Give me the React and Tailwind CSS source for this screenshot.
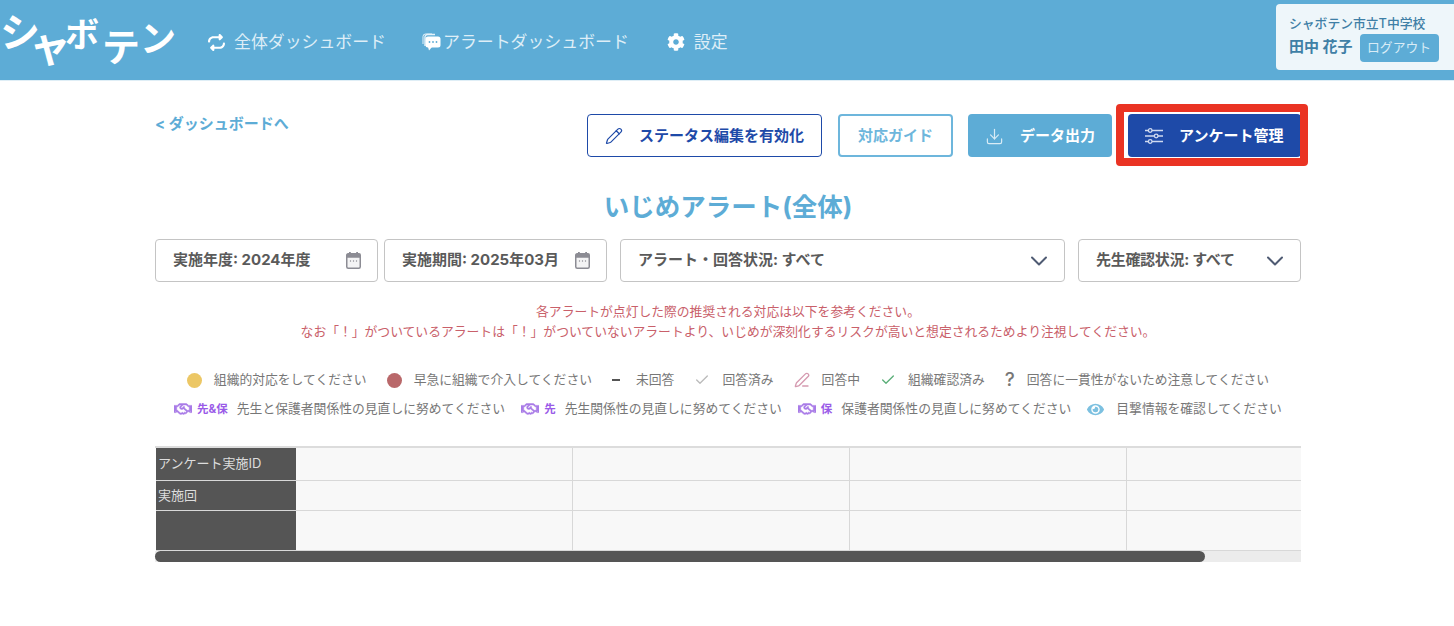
import React from 'react';
import { Pencil, Download, Check, PenLine } from 'lucide-react';
import { FaCog, FaRegHandshake, FaEye } from 'react-icons/fa';
import { FaRepeat } from 'react-icons/fa6';

const NavItem = ({ icon, label, className }) => (
  <div className={`flex items-center text-[16.9px] text-[#deeef7] ${className}`}>
    {icon}
    <span>{label}</span>
  </div>
);

const ChatIcon = () => (
  <svg width="19" height="18" viewBox="0 0 19 18" className="mr-[2px]">
    <path d="M3 13V4a2.5 2.5 0 0 1 2.5-2.5H13" fill="none" stroke="#e6f2f9" strokeWidth="1.4" />
    <path d="M1 11V3.5A2.5 2.5 0 0 1 3.5 1H10" fill="none" stroke="#e6f2f9" strokeWidth="1" />
    <rect x="3.5" y="3.5" width="15" height="11" rx="2.5" fill="#fff" />
    <path d="M6 14h4l-3 3.5z" fill="#fff" />
    <circle cx="7.5" cy="9" r="0.9" fill="#5dacd6" />
    <circle cx="11" cy="9" r="0.9" fill="#5dacd6" />
    <circle cx="14.5" cy="9" r="0.9" fill="#5dacd6" />
  </svg>
);

const CalendarIcon = () => (
  <svg width="15" height="17" viewBox="0 0 15 17">
    <rect x="3" y="0" width="1.8" height="3" fill="#8c8c94" />
    <rect x="10.2" y="0" width="1.8" height="3" fill="#8c8c94" />
    <rect x="0.75" y="1.75" width="13.5" height="14.5" rx="1.5" fill="#f4f4f5" stroke="#8c8c94" strokeWidth="1.5" />
    <rect x="0.75" y="1.75" width="13.5" height="4" fill="#8c8c94" />
    <circle cx="4.5" cy="9" r="0.7" fill="#8c8c94" />
    <circle cx="7.5" cy="9" r="0.7" fill="#8c8c94" />
    <circle cx="10.5" cy="9" r="0.7" fill="#8c8c94" />
  </svg>
);

const Chevron = () => (
  <svg width="18" height="10" viewBox="0 0 18 10" fill="none" stroke="#4f5b73" strokeWidth="2" strokeLinecap="round" strokeLinejoin="round">
    <polyline points="2,1.5 9,8.5 16,1.5" />
  </svg>
);

const SlidersIcon = () => (
  <svg width="18" height="18" viewBox="0 0 18 18" fill="none" stroke="#d0daf0" strokeWidth="1.3" className="mr-[16px]">
    <path d="M0 3.5h3.5M7 3.5h11M0 9h9.5M13 9h5M0 14.5h3.5M7 14.5h11" />
    <circle cx="5.2" cy="3.5" r="1.8" />
    <circle cx="11.2" cy="9" r="1.8" />
    <circle cx="5.2" cy="14.5" r="1.8" />
  </svg>
);

const Filter = ({ label, width, calendar, labelClass = '' }) => (
  <div className={`flex h-[43px] items-center justify-between rounded border border-[#c4c4c4] bg-white pl-[17px] pr-[16px] text-[15px] font-bold text-[#5a5a5a] ${width}`}>
    <span className={labelClass}>{label}</span>
    {calendar ? <CalendarIcon /> : <Chevron />}
  </div>
);

const Legend = ({ icon, label, badge, labelClass }) => (
  <div className="flex items-center whitespace-nowrap text-[12.8px] text-[#777]">
    {icon}
    {badge && <span className="ml-[5px] text-[11.5px] font-bold text-[#9a5be8]">{badge}</span>}
    <span className={labelClass || (badge ? 'ml-[9px]' : 'ml-[12px]')}>{label}</span>
  </div>
);

const Shake = () => <FaRegHandshake size={18} stroke="currentColor" strokeWidth={18} className="text-[#a97be8]" />;

const TableRow = ({ label, height }) => (
  <div className={`flex border-b border-[#d8d8d8] ${height}`}>
    <div className="flex w-[140px] shrink-0 items-center bg-[#555] pl-[2px] text-[13px] text-[#ddd]">{label}</div>
    {[0, 1, 2].map((i) => (
      <div key={i} className="w-[277px] shrink-0 border-r border-[#d8d8d8] bg-[#f8f8f8]" />
    ))}
    <div className="flex-1 bg-[#f8f8f8]" />
  </div>
);

export default function App() {
  return (
    <div className="min-h-[626px] bg-white font-['Inter','Noto_Sans_CJK_JP',sans-serif]">
      <header className="flex h-[81px] items-start border-b border-[#dfeef6] bg-[#5dacd6]">
        <div className="flex w-[178px] items-start font-['Noto_Sans_CJK_JP',sans-serif] font-bold leading-none text-white">
          <span className="mt-[10px] text-[40px]">シ</span>
          <span className="-ml-[11px] mt-[23px] text-[42px]">ャ</span>
          <span className="-ml-[6px] mt-[16px] text-[34px]">ボ</span>
          <span className="ml-[3px] mt-[26px] text-[38px]">テ</span>
          <span className="mt-[18px] text-[36px]">ン</span>
        </div>
        <nav className="mt-[30px] flex items-center leading-[24px]">
          <NavItem className="ml-[30px]" icon={<FaRepeat size={17} className="mr-[9px] text-white" />} label="全体ダッシュボード" />
          <NavItem className="ml-[36px]" icon={<ChatIcon />} label="アラートダッシュボード" />
          <NavItem className="ml-[38px]" icon={<FaCog size={18} className="mr-[9px] text-white" />} label="設定" />
        </nav>
        <div className="ml-auto mt-[4px] h-[66px] w-[178px] rounded-l bg-[#eef6fa] pl-[13px] pt-[11px] text-[#3f7fa6]">
          <div className="text-[12.8px] font-medium leading-[18px]">シャボテン市立T中学校</div>
          <div className="mt-[1px] flex items-center">
            <span className="pb-[2px] text-[15px] font-bold">田中 花子</span>
            <span className="ml-[7px] flex h-[28px] w-[79px] items-center justify-center rounded bg-[#5dacd6] text-[12.8px] text-[#d9ecf6]">ログアウト</span>
          </div>
        </div>
      </header>

      <main className="ml-[155px] w-[1146px]">
        <div className="relative flex h-[76px] items-start pt-[33px]">
          <span className="mt-[1px] text-[15px] font-bold leading-[18px] text-[#5dacd6]">&lt; ダッシュボードへ</span>
          <div className="ml-auto flex">
            <button className="flex h-[43px] w-[235px] items-center rounded border border-[#1e4aa8] pl-[17px] pt-[1px] text-[15px] font-bold text-[#1e4aa8]">
              <Pencil size={18} className="mr-[16px]" strokeWidth={1.6} />
              ステータス編集を有効化
            </button>
            <button className="ml-[16px] flex h-[43px] w-[115px] items-center justify-center rounded border-2 border-[#6db6dc] pt-[1px] text-[15px] font-bold text-[#6db6dc]">対応ガイド</button>
            <button className="ml-[15px] flex h-[43px] w-[144px] items-center rounded bg-[#5dacd6] pl-[17px] pt-[1px] text-[15px] font-bold text-white">
              <Download size={19} className="mr-[16px] text-[#d9ecf6]" strokeWidth={1.5} />
              データ出力
            </button>
            <button className="ml-[16px] flex h-[43px] w-[173px] items-center rounded-sm bg-[#1e4aa8] pl-[17px] pt-[1px] text-[15px] font-bold text-white">
              <SlidersIcon />
              アンケート管理
            </button>
          </div>
          <div className="absolute right-[-7px] top-[23px] h-[62px] w-[192px] rounded border-[8px] border-[#ea3323]" />
        </div>

        <h1 className="mt-[33px] text-center text-[25.5px] font-bold leading-[34px] text-[#5dacd6]">いじめアラート(全体)</h1>

        <div className="mt-[15px] flex">
          <Filter label="実施年度: 2024年度" width="w-[223px]" calendar />
          <Filter label="実施期間: 2025年03月" width="ml-[6px] w-[223px]" calendar />
          <Filter label="アラート・回答状況: すべて" width="ml-[13px] w-[445px]" />
          <Filter label="先生確認状況: すべて" width="ml-[13px] w-[223px]" labelClass="tracking-[-0.3px]" />
        </div>

        <div className="mt-[20px] text-center text-[12.8px] leading-[20px] text-[#c9606a]">
          <p>各アラートが点灯した際の推奨される対応は以下を参考ください。</p>
          <p>なお「！」がついているアラートは「！」がついていないアラートより、いじめが深刻化するリスクが高いと想定されるためより注視してください。</p>
        </div>

        <div className="mt-[28px] flex items-center justify-center gap-[20px] leading-[20px]">
          <Legend icon={<span className="h-[15px] w-[15px] rounded-full bg-[#ecc765]" />} label="組織的対応をしてください" />
          <Legend icon={<span className="h-[15px] w-[15px] rounded-full bg-[#b9686a]" />} label="早急に組織で介入してください" />
          <Legend icon={<span className="h-[2px] w-[8px] bg-[#555]" />} label="未回答" labelClass="ml-[16px]" />
          <Legend icon={<Check size={16} className="text-[#bbb]" />} label="回答済み" />
          <Legend icon={<PenLine size={16} className="text-[#d59ab0]" />} label="回答中" />
          <Legend icon={<Check size={16} className="text-[#5aae78]" />} label="組織確認済み" />
          <Legend icon={<span className="text-[19px] font-medium text-[#777]">?</span>} label="回答に一貫性がないため注意してください" />
        </div>
        <div className="mt-[9px] flex items-center justify-center gap-[16px] leading-[20px]">
          <Legend icon={<Shake />} badge="先&保" label="先生と保護者関係性の見直しに努めてください" />
          <Legend icon={<Shake />} badge="先" label="先生関係性の見直しに努めてください" />
          <Legend icon={<Shake />} badge="保" label="保護者関係性の見直しに努めてください" />
          <Legend icon={<FaEye size={17} className="text-[#7cc0e0]" />} label="目撃情報を確認してください" />
        </div>

        <div className="mt-[27px] overflow-hidden border-t-2 border-[#dcdcdc] pl-[1px]">
          <TableRow label="アンケート実施ID" height="h-[33px]" />
          <TableRow label="実施回" height="h-[30px]" />
          <TableRow label="" height="h-[40px]" />
        </div>
        <div className="h-[11px] bg-[#ececec]">
          <div className="h-full w-[1050px] rounded-full bg-[#555]" />
        </div>
      </main>
    </div>
  );
}
